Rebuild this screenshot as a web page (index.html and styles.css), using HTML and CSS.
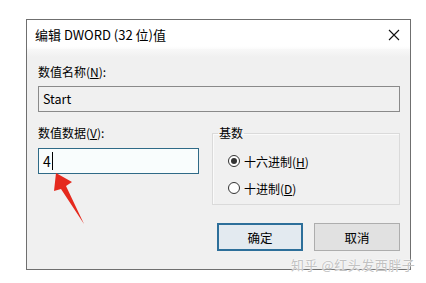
FILE: index.html
```html
<!DOCTYPE html>
<html lang="zh">
<head>
    <meta charset="UTF-8">
    <title>编辑 DWORD (32 位)值</title>
    <link rel="stylesheet" href="styles.css">
</head>
<body>

<div class="window">
    <div class="titlebar">
        <span class="title">编辑 DWORD (32 位)值</span>
        <svg class="close" width="12" height="12" viewBox="0 0 12 12">
            <path d="M1 1 L11 11 M11 1 L1 11" stroke="#111" stroke-width="1.1" fill="none"/>
        </svg>
    </div>
    <div class="content">
        <label class="label">数值名称(<u>N</u>):</label>
        <div class="field name-field">Start</div>

        <div class="row">
            <div class="data-col">
                <label class="label">数值数据(<u>V</u>):</label>
                <div class="field data-field">4<span class="caret"></span></div>
            </div>
            <fieldset class="group">
                <legend>基数</legend>
                <div class="radio"><span class="dot checked"></span><span>十六进制(<u>H</u>)</span></div>
                <div class="radio"><span class="dot"></span><span>十进制(<u>D</u>)</span></div>
            </fieldset>
        </div>

        <div class="buttons">
            <button class="btn default">确定</button>
            <button class="btn">取消</button>
        </div>
    </div>
</div>

<!-- red arrow pointing at the value box -->
<svg class="arrow" width="426" height="283" viewBox="0 0 426 283">
    <polygon points="56,173 72,182 66,186 84,224 61,189 54,191" fill="#e52a1e"/>
</svg>

<div class="watermark">知乎 @红头发西胖子</div>

</body>
</html>
```

FILE: styles.css
```css
body {
    margin: 0;
    width: 426px;
    height: 283px;
    background: #fff;
    font-family: "Noto Sans CJK SC", "Noto Sans", sans-serif;
    font-size: 12px;
    color: #000;
    position: relative;
    overflow: hidden;
}
.window {
    margin: 19px 0 0 26px;
    width: 383px;
    height: 249px;
    border: 1px solid #6f6f6f;
    background: #f0f0f0;
    display: flex;
    flex-direction: column;
}
.titlebar {
    height: 29px;
    padding: 0 8px;
    display: flex;
    align-items: center;
    justify-content: space-between;
    background: linear-gradient(#fff 0, #fff 26px, #f0f0f0 36px);
    font-size: 13px;
}
.close {
    margin-right: 2px;
}
.content {
    padding: 15px 10px 0 11px;
    background: linear-gradient(#f8f8f8, #f0f0f0 8px);
}
.label {
    display: block;
    height: 16px;
    line-height: 16px;
}
.field {
    box-sizing: border-box;
    height: 26px;
    line-height: 24px;
    padding-left: 4px;
    font-size: 12.5px;
}
.name-field {
    margin-top: 6px;
    border: 1px solid #8a8a8a;
    background: #f0f0f0;
}
.row {
    display: grid;
    grid-template-columns: 161px 188px;
    column-gap: 13px;
    margin-top: 13px;
}
.data-field {
    margin-top: 7px;
    border: 1px solid #2f6a87;
    background: #f9fdfd;
    font-size: 14px;
    display: flex;
    align-items: center;
}
.caret {
    display: inline-block;
    width: 1px;
    height: 18px;
    margin-left: 1px;
    background: #000;
}
.group {
    margin: 0;
    padding: 12px 0 8px 5px;
    border: 1px solid #dadada;
    box-shadow: inset 1px 1px 0 #fafafa;
    min-width: 0;
}
.group legend {
    padding: 0 1px;
    line-height: 16px;
}
.radio {
    display: flex;
    align-items: center;
    gap: 4px;
    height: 16px;
    margin-left: 10px;
}
.radio + .radio {
    margin-top: 11px;
}
.dot {
    box-sizing: border-box;
    width: 12px;
    height: 12px;
    border: 1px solid #333;
    border-radius: 50%;
    background: #fff;
    display: flex;
    align-items: center;
    justify-content: center;
}
.dot.checked::after {
    content: "";
    width: 6px;
    height: 6px;
    border-radius: 50%;
    background: #333;
}
.buttons {
    display: flex;
    justify-content: flex-end;
    gap: 11px;
    margin-top: 18px;
}
.btn {
    box-sizing: border-box;
    width: 86px;
    height: 28px;
    font-family: inherit;
    font-size: 12.5px;
    border: 1px solid #adadad;
    background: #e1e1e1;
    color: #000;
    padding: 0;
}
.btn.default {
    border: 2px solid #2d6f9a;
    background: #e3eaf0;
}
.arrow {
    position: absolute;
    left: 0;
    top: 0;
    pointer-events: none;
}
.watermark {
    position: absolute;
    left: 291px;
    top: 255px;
    font-size: 13px;
    color: #c2c2c2;
    text-shadow: 0 0 2px #fff, 0 0 1px #fff;
    letter-spacing: 0.5px;
}
```
